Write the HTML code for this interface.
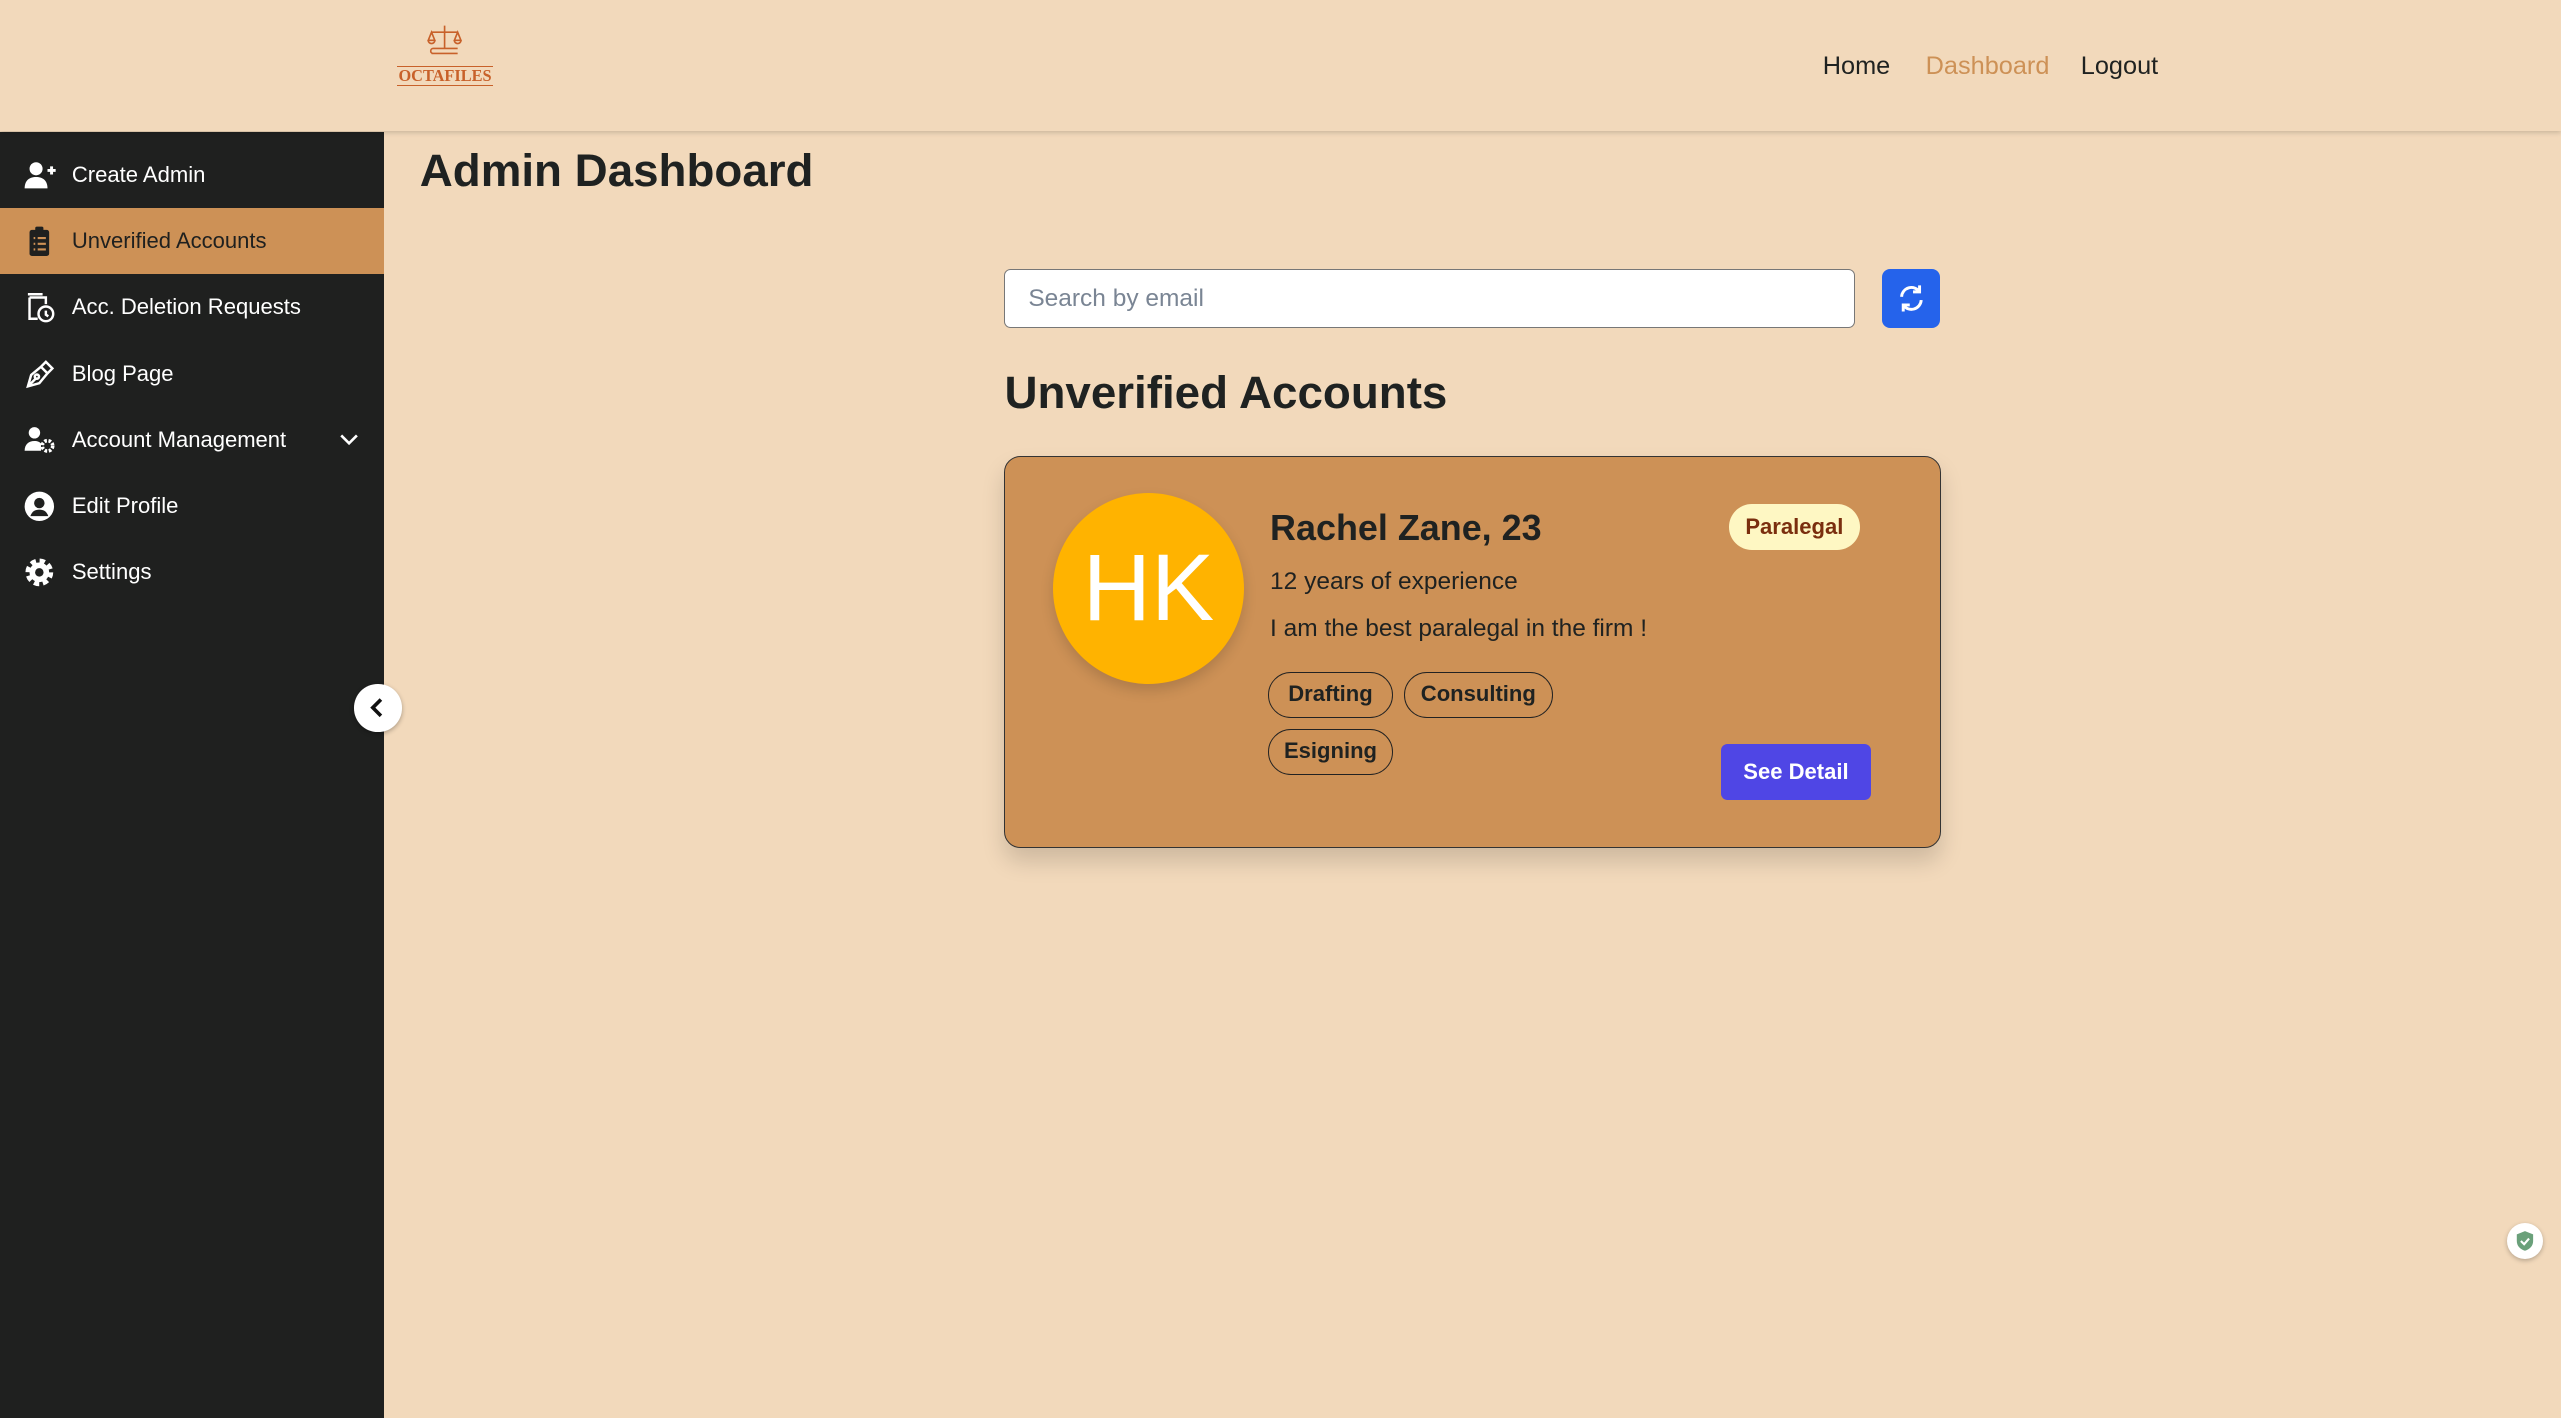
<!DOCTYPE html>
<html><head><meta charset="utf-8"><style>
html{zoom:1.63329}
body{margin:0;width:1568px;height:868px;background:#f2d9bb;font-family:"Liberation Sans",sans-serif;position:relative;overflow:hidden;color:#1f2221}
.top{position:absolute;left:0;top:0;width:1568px;height:80px;background:#f2d9bb;box-shadow:0 1px 3px rgba(0,0,0,.18);z-index:2}
.logo{position:absolute;left:243px;top:15px;width:59px;text-align:center;color:#c8612a}
.logo .t{font-family:"Liberation Serif",serif;font-weight:bold;font-size:10px;letter-spacing:0;border-top:1px solid #c8612a;border-bottom:1px solid #c8612a;line-height:11px;margin-top:1px}
.nav{position:absolute;top:31px;font-size:15.5px}
.side{position:absolute;left:0;top:81px;width:235px;height:787px;background:#1f201f;padding-top:6px;box-sizing:border-box}
.item{height:40.5px;display:flex;align-items:center;color:#fff;font-size:13.5px;position:relative}
.item svg{position:absolute;left:14px;width:20px;height:20px}
.item span{position:absolute;left:44px}
.item.act{background:#cd9156;color:#1f201f}
h1{position:absolute;left:257px;top:89px;margin:0;font-size:28px;font-weight:bold}
.search{position:absolute;left:615px;top:165px;width:521px;height:36px;border:1px solid #777;border-radius:4px;background:#fff;font-size:15px;color:#7a8594;box-sizing:border-box;padding:9px 14px}
.ref{position:absolute;left:1152px;top:165px;width:36px;height:36px;border-radius:5px;background:#2563eb}
h2{position:absolute;left:615px;top:225px;margin:0;font-size:28px;font-weight:bold}
.card{position:absolute;left:615px;top:279px;width:572px;height:239px;background:#cd9156;border:1px solid #333;border-radius:10px;box-shadow:0 8px 14px rgba(0,0,0,.15)}
.av{position:absolute;left:29px;top:22px;width:117px;height:117px;border-radius:50%;background:#ffb300;color:#fff;font-size:58px;text-align:center;line-height:117px;box-shadow:0 4px 8px rgba(0,0,0,.15)}
.tag{position:absolute;height:28px;border:1px solid #222;border-radius:14px;font-size:13.5px;font-weight:bold;text-align:center;box-sizing:border-box;line-height:26px}
</style></head><body>
<div class="top">
 <div class="logo"><svg width="24" height="20" viewBox="0 0 24 20" fill="none" stroke="#c8612a" stroke-width="1"><path d="M12 1v14M4 5h16M4 5l-2 5h4zM20 5l-2 5h4zM2 10a2 2 0 0 0 4 0M18 10a2 2 0 0 0 4 0M5 15h15M4 18h16M5 15a1.5 1.5 0 0 0 0 3"/></svg><div class="t">OCTAFILES</div></div>
 <div class="nav" style="left:1116px;top:32px">Home</div>
 <div class="nav" style="left:1179px;top:32px;color:#cd9156">Dashboard</div>
 <div class="nav" style="left:1274px;top:32px">Logout</div>
</div>
<div class="side">
 <div class="item"><svg viewBox="0 0 20 20" fill="#fff"><circle cx="8" cy="6" r="4"/><path d="M1 18c0-5 3-7 7-7s7 2 7 7z"/><path d="M15 7h5M17.5 4.5v5" stroke="#fff" stroke-width="1.8"/></svg><span>Create Admin</span></div>
 <div class="item act"><svg viewBox="0 0 20 20"><rect x="4" y="3" width="12" height="16" rx="1.5" fill="#1f201f"/><rect x="7.5" y="1" width="5" height="3" rx="1" fill="#1f201f"/><path d="M6.5 8h1M9 8h5M6.5 11.5h1M9 11.5h5M6.5 15h1M9 15h5" stroke="#cd9156" stroke-width="1.3"/></svg><span>Unverified Accounts</span></div>
 <div class="item"><svg viewBox="0 0 20 20" fill="none" stroke="#fff" stroke-width="1.5"><path d="M3 2h9M4 4v13h5"/><path d="M4 4h10v4"/><circle cx="14" cy="14" r="4.5"/><path d="M14 12v2.5l1.5 1"/></svg><span>Acc. Deletion Requests</span></div>
 <div class="item"><svg viewBox="0 0 20 20" fill="none" stroke="#fff" stroke-width="1.5"><path d="M3 18l2-7 6-5 4 4-5 6zM3 18l5-5M11 6l3-3 4 4-3 3"/><circle cx="8.5" cy="12" r="1.3"/></svg><span>Blog Page</span></div>
 <div class="item"><svg viewBox="0 0 20 20" fill="#fff"><circle cx="7" cy="6" r="3.5"/><path d="M1 17c0-4 2.5-6 6-6 2 0 3 .5 4 1.5v4.5z"/><circle cx="15" cy="14" r="3.2" fill="none" stroke="#fff" stroke-width="2.2" stroke-dasharray="1.6 1"/></svg><span>Account Management</span><svg viewBox="0 0 20 20" style="left:206px;width:16px" fill="none" stroke="#fff" stroke-width="2"><path d="M4 7l6 6 6-6"/></svg></div>
 <div class="item"><svg viewBox="0 0 20 20"><circle cx="10" cy="10" r="9" fill="#fff"/><circle cx="10" cy="8" r="3.2" fill="#1f201f"/><path d="M4.5 16c1-3 3-4 5.5-4s4.5 1 5.5 4" fill="#1f201f"/></svg><span>Edit Profile</span></div>
 <div class="item"><svg viewBox="0 0 20 20"><circle cx="10" cy="10" r="6.5" fill="none" stroke="#fff" stroke-width="4" stroke-dasharray="3 2.1"/><circle cx="10" cy="10" r="6" fill="#fff"/><circle cx="10" cy="10" r="2.6" fill="#1f201f"/></svg><span>Settings</span></div>
</div>
<div style="position:absolute;left:217px;top:419px;width:29px;height:29px;border-radius:50%;background:#fff;box-shadow:0 1px 3px rgba(0,0,0,.3)"><svg width="29" height="29" viewBox="0 0 29 29" fill="none" stroke="#111" stroke-width="2.2"><path d="M16.5 9.5l-5 5 5 5"/></svg></div>
<h1>Admin Dashboard</h1>
<div class="search">Search by email</div>
<div class="ref"><svg width="36" height="36" viewBox="0 0 36 36" fill="none" stroke="#fff" stroke-width="1.8"><path d="M12 17a6 6 0 0 1 11-3M24 19a6 6 0 0 1-11 3M23 10v4h-4M13 26v-4h4"/></svg></div>
<h2>Unverified Accounts</h2>
<div class="card">
 <div class="av">HK</div>
 <div style="position:absolute;left:162px;top:31px;font-size:22px;font-weight:bold">Rachel Zane, 23</div>
 <div style="position:absolute;left:443px;top:29px;width:80px;height:28px;border-radius:14px;background:#fef7c3;color:#7a2e0e;font-size:13.5px;font-weight:bold;text-align:center;line-height:28px">Paralegal</div>
 <div style="position:absolute;left:162px;top:68px;font-size:15px">12 years of experience</div>
 <div style="position:absolute;left:162px;top:97px;font-size:15px">I am the best paralegal in the firm !</div>
 <div class="tag" style="left:161px;top:132px;width:76px">Drafting</div>
 <div class="tag" style="left:244px;top:132px;width:91px">Consulting</div>
 <div class="tag" style="left:161px;top:167px;width:76px">Esigning</div>
 <div style="position:absolute;left:438px;top:176px;width:92px;height:34px;border-radius:4px;background:#4f46e5;color:#fff;font-size:13.5px;font-weight:bold;text-align:center;line-height:34px">See Detail</div>
</div>
<div style="position:absolute;left:1535px;top:749px;width:22px;height:22px;border-radius:50%;background:#fff;box-shadow:0 1px 3px rgba(0,0,0,.25)"><svg width="22" height="22" viewBox="0 0 22 22"><path d="M11 5l5 2v4c0 3-2 5-5 6-3-1-5-3-5-6V7z" fill="#6aa07a"/><path d="M8.5 11l2 2 3-3.5" stroke="#fff" stroke-width="1.3" fill="none"/></svg></div>
</body></html>
